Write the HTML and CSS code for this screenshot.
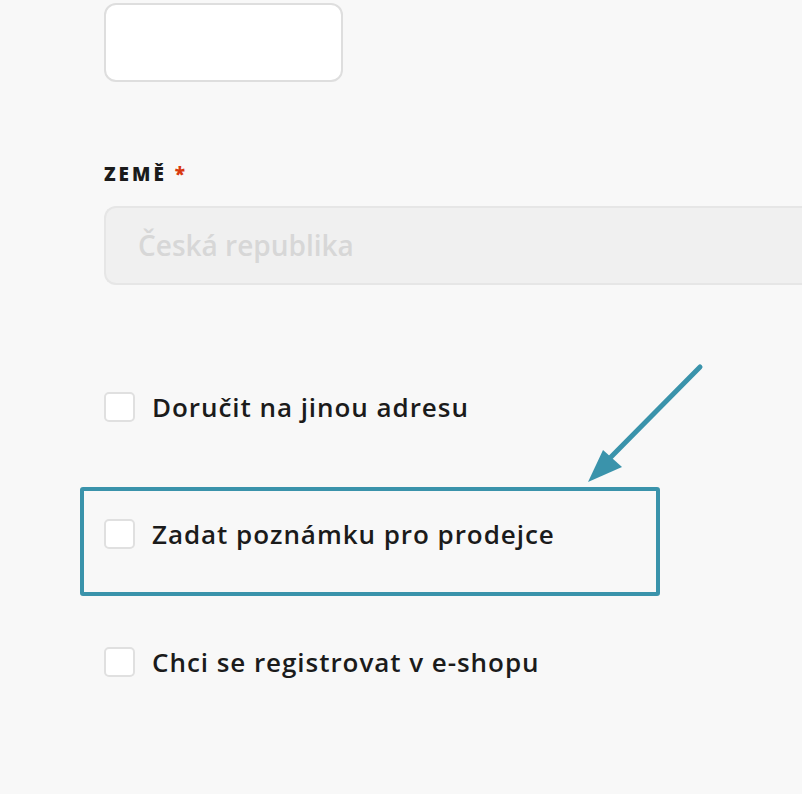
FILE: index.html
```html
<!DOCTYPE html>
<html>
<head>
    <title>Pokladna</title>
    <meta charset="UTF-8"/>
    <link rel="stylesheet" href="styles.css">
</head>
<body>
<div class="checkout">
    <div class="field">
        <input class="text_input" type="text"/>
    </div>

    <div class="field field_country">
        <label class="field_label">Země <span class="required">*</span></label>
        <div class="select_box">Česká republika</div>
    </div>

    <div class="options">
        <label class="option">
            <span class="checkbox"></span>
            <span class="option_text">Doručit na jinou adresu</span>
        </label>
        <div class="highlight">
            <label class="option">
                <span class="checkbox"></span>
                <span class="option_text">Zadat poznámku pro prodejce</span>
            </label>
        </div>
        <label class="option">
            <span class="checkbox"></span>
            <span class="option_text">Chci se registrovat v e-shopu</span>
        </label>
    </div>

    <svg class="pointer" width="140" height="140" viewBox="0 0 140 140">
        <line x1="130" y1="17" x2="38" y2="110" stroke="#3a93ab" stroke-width="5" stroke-linecap="round"/>
        <polygon points="18,132 33,100 52,117" fill="#3a93ab"/>
    </svg>
</div>
</body>
</html>
```

FILE: styles.css
```css
html {
    height: 100%;
}

body {
    margin: 0;
    height: 100%;
    background-color: #f8f8f8;
    color: #1b1b1b;
    font-family: "Open Sans", "Noto Sans", sans-serif;
    overflow: hidden;
}

.checkout {
    position: relative;
    padding-left: 104px;
    padding-top: 3px;
}

.text_input {
    display: block;
    box-sizing: border-box;
    width: 239px;
    height: 79px;
    margin: 0;
    border: 2px solid #dedede;
    border-radius: 12px;
    background: #fff;
    outline: none;
}

.field_country {
    margin-top: 80px;
}

.field_label {
    display: block;
    font-size: 19px;
    font-weight: 800;
    letter-spacing: 3px;
    text-transform: uppercase;
    line-height: 24px;
}

.required {
    color: #d83a10;
}

.select_box {
    box-sizing: border-box;
    width: 698px;
    height: 79px;
    margin-top: 20px;
    padding-left: 32px;
    border: 2px solid #e6e6e6;
    border-right: 0;
    border-radius: 12px 0 0 12px;
    background: #f0f0f0;
    color: #d7d7d7;
    font-size: 28px;
    font-weight: 600;
    line-height: 75px;
}

.options {
    margin-top: 106px;
}

.option {
    display: flex;
    align-items: center;
    gap: 17px;
    height: 32px;
}

.option + .highlight {
    margin-top: 64px;
}

.highlight + .option {
    margin-top: 50px;
}

.highlight {
    box-sizing: border-box;
    width: 580px;
    height: 109px;
    margin-left: -24px;
    padding: 27px 0 0 20px;
    border: 4px solid #3a93ab;
    border-radius: 3px;
}

.checkbox {
    box-sizing: border-box;
    width: 31px;
    height: 30px;
    border: 2px solid #e0e0e0;
    border-radius: 5px;
    background: #fff;
}

.option_text {
    font-size: 26px;
    font-weight: 600;
    letter-spacing: 0.95px;
    line-height: 32px;
}

.pointer {
    position: absolute;
    left: 570px;
    top: 350px;
}
```
